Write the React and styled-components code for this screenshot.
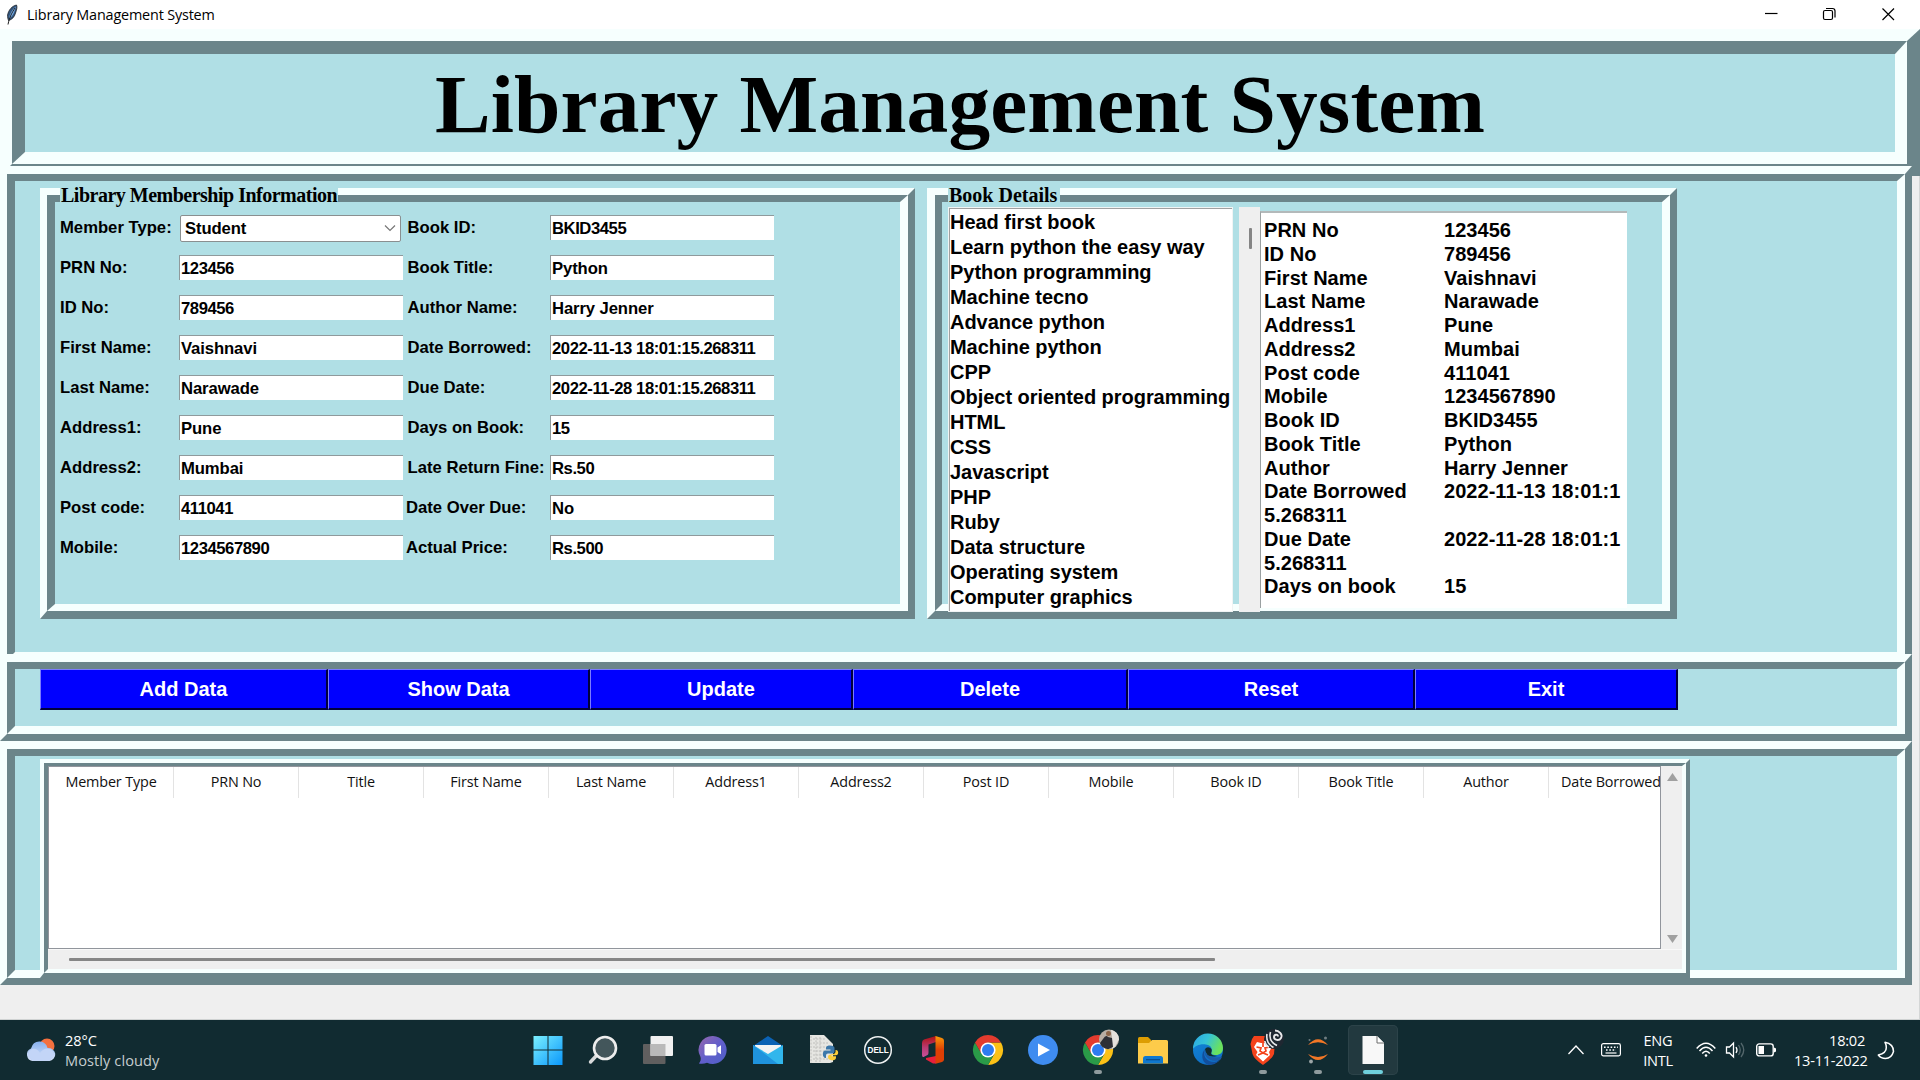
import React from "react";
import styled, { createGlobalStyle, css } from "styled-components";

const LIGHT = "#f6fffe";
const DARK = "#6b858a";
const POWDER = "#b0dfe5";

const Global = createGlobalStyle`
  * { box-sizing: border-box; }
  body { margin: 0; background: #efefef; overflow: hidden; }
  button, input { font: inherit; margin: 0; }
`;

const Screen = styled.div`
  width: 1920px;
  height: 1080px;
  display: flex;
  flex-direction: column;
  overflow: hidden;
  background: #efefef;
  color: #000;
  font-family: "Liberation Sans", Arial, sans-serif;
`;

/* ---------- window chrome ---------- */
const TitleBar = styled.header`
  height: 29px;
  flex: none;
  display: flex;
  align-items: center;
  background: #fff;
  padding-left: 4px;
`;
const WindowTitle = styled.span`
  font-family: "Open Sans", "Noto Sans", sans-serif;
  font-size: 14.4px;
  letter-spacing: -0.17px;
  margin-left: 7px;
  flex: 1;
`;
const WindowControls = styled.div`
  display: flex;
  align-self: stretch;
  svg { width: 58.5px; height: 29px; display: block; }
`;
const Client = styled.main`
  height: 991px;
  flex: none;
  display: flex;
  flex-direction: column;
  align-items: flex-start;
  border-bottom: 1px solid #cfd2d2;
  background: linear-gradient(90deg, #efefef 1919px, #d4d6d6 1919px);
`;

/* ---------- ridge relief ---------- */
const RidgeOuter = styled.section`
  position: relative;
  flex: none;
  width: ${(p) => p.$w}px;
  height: ${(p) => p.$h}px;
  margin-top: ${(p) => p.$mt || 0}px;
  border-style: solid;
  border-width: ${(p) => p.$ow};
  border-color: ${LIGHT} ${DARK} ${DARK} ${LIGHT};
  background: ${POWDER};
`;
const RidgeInner = styled.div`
  width: 100%;
  height: 100%;
  border-style: solid;
  border-width: ${(p) => p.$iw};
  border-color: ${DARK} ${LIGHT} ${LIGHT} ${DARK};
  padding: ${(p) => p.$pad || 0};
  display: flex;
  align-items: flex-start;
  gap: ${(p) => p.$gap || 0}px;
`;
function Ridge({ w, h, mt, ow, iw, pad, gap, children, legend }) {
  return (
    <RidgeOuter $w={w} $h={h} $mt={mt} $ow={ow}>
      {legend}
      <RidgeInner $iw={iw} $pad={pad} $gap={gap}>{children}</RidgeInner>
    </RidgeOuter>
  );
}

const Heading = styled.h1`
  margin: 0;
  width: 100%;
  text-align: center;
  font: bold 83.4px/97px "Liberation Serif", "Times New Roman", serif;
  letter-spacing: 0.13px;
  padding-top: 2px;
`;
const Legend = styled.div`
  position: absolute;
  top: -7px;
  left: ${(p) => p.$x}px;
  width: ${(p) => p.$w}px;
  height: 15px;
  padding-left: 1px;
  background: ${POWDER};
  font: bold 20px/15px "Liberation Serif", "Times New Roman", serif;
  letter-spacing: ${(p) => p.$ls};
  white-space: nowrap;
`;

/* ---------- membership form ---------- */
const Form = styled.div`
  display: grid;
  grid-template-columns: 119px 229px 142px 224px;
  grid-auto-rows: 40px;
  align-items: center;
`;
const Label = styled.label`
  font-weight: bold;
  font-size: 16.67px;
  line-height: 20px;
  white-space: nowrap;
  margin-left: ${(p) => p.$shift || 0}px;
`;
const Entry = styled.div`
  width: 224px;
  height: 25px;
  margin-top: -1px;
  background: #fff;
  border-top: 1px solid #8f9a9c;
  border-left: 1px solid #8f9a9c;
  padding-left: 1px;
  font-weight: bold;
  font-size: 16.67px;
  line-height: 26px;
  letter-spacing: ${(p) => (p.$tight ? "-0.44px" : "-0.1px")};
  white-space: nowrap;
`;
const Combo = styled(Entry)`
  width: 221px;
  height: 27px;
  margin-left: 1px;
  margin-top: 0;
  border: 1px solid #8a8f90;
  border-radius: 2px;
  padding: 0 4px;
  line-height: 25px;
  display: flex;
  align-items: center;
  justify-content: space-between;
`;

/* ---------- book details ---------- */
const BookList = styled.ul`
  list-style: none;
  margin: 0;
  width: 285px;
  height: 405px;
  flex: none;
  padding: 1.500px 0 0 1px;
  background: #fff;
  border: 1px solid #f0f4f4;
  box-shadow: inset 1px 1px 0 #a0a0a0;
  font: bold 20px/25px "Liberation Sans", Arial, sans-serif;
  letter-spacing: -0.04px;
  white-space: nowrap;
`;
const ListScroll = styled.div`
  width: 21px;
  height: 405px;
  flex: none;
  margin-left: 6px;
  background: #efefef;
  padding: 21px 0 0 9.5px;
`;
const ListThumb = styled.div`
  width: 3px;
  height: 21px;
  border-radius: 1px;
  background: #858585;
`;
const Receipt = styled.div`
  width: 367px;
  height: 397px;
  flex: none;
  margin-top: 4px;
  background: #fff;
  border-top: 2px solid #b3b9ba;
  border-left: 1px solid #9aa0a1;
  padding: 6px 0 0 3px;
  font: bold 20px/23.75px "Liberation Sans", Arial, sans-serif;
  letter-spacing: 0.04px;
`;
const ReceiptLine = styled.div`
  display: grid;
  grid-template-columns: 180px 1fr;
  height: 23.78px;
  white-space: nowrap;
`;

/* ---------- buttons ---------- */
const Action = styled.button`
  width: ${(p) => p.$w}px;
  height: 41px;
  flex: none;
  padding: 0;
  border-style: solid;
  border-width: 1px 2px 2px 1px;
  border-color: #7b7bff #00003c #00003c #7b7bff;
  border-radius: 0;
  background: #0000ff;
  color: #fff;
  font: bold 20px/38px "Liberation Sans", Arial, sans-serif;
`;

/* ---------- table ---------- */
const TableArea = styled.div`
  display: grid;
  grid-template-columns: 1614px 20px;
  grid-template-rows: 183px 20px;
  width: 1634px;
  height: 203px;
  background: #efefef;
`;
const Tree = styled.div`
  width: 1613px;
  background: #fff;
  border: 1px solid #91959c;
  height: 183px;
  overflow: hidden;
`;
const TreeHead = styled.div`
  display: flex;
  width: 1613px;
  height: 31px;
  background: #fff;
  overflow: hidden;
`;
const HeadCell = styled.div`
  width: 125px;
  flex: none;
  border-right: 1px solid #e3e3e3;
  text-align: center;
  font: 14.4px/29px "Open Sans", "Noto Sans", sans-serif;
  letter-spacing: -0.15px;
  color: #111;
  white-space: nowrap;
`;
const VScroll = styled.div`
  display: flex;
  flex-direction: column;
  justify-content: space-between;
  align-items: center;
  padding: 7px 0 6px;
  svg { display: block; }
`;
const HScroll = styled.div`
  grid-column: 1 / 3;
  border-top: 1px solid #f8f8f8;
  padding: 8px 0 0 21px;
`;
const HThumb = styled.div`
  width: 1146px;
  height: 3px;
  border-radius: 1px;
  background: #868686;
`;

/* ---------- taskbar ---------- */
const Taskbar = styled.footer`
  height: 60px;
  flex: none;
  display: flex;
  align-items: center;
  background: #112b31;
  color: #fff;
  font: 14.6px/20px "Open Sans", "Noto Sans", sans-serif;
  letter-spacing: -0.1px;
`;
const Weather = styled.div`
  width: 523px;
  padding-left: 25px;
  display: flex;
  align-items: center;
  gap: 9px;
  p { margin: 0; }
  p + p { color: #c5cdcf; letter-spacing: 0.07px; }
`;
const Apps = styled.div`
  display: flex;
  gap: 5px;
  width: 1033px;
`;
const AppTile = styled.div`
  position: relative;
  width: 50px;
  height: 50px;
  border-radius: 5px;
  display: flex;
  align-items: center;
  justify-content: center;
  ${(p) => p.$active && css`
    background: #22393f;
    box-shadow: inset 0 0 0 1px #2c4349;
  `}
  svg { display: block; overflow: visible; }
`;
const Indicator = styled.i`
  position: absolute;
  bottom: 1px;
  left: 50%;
  width: ${(p) => p.$w}px;
  margin-left: ${(p) => -p.$w / 2}px;
  height: 4px;
  border-radius: 2px;
  background: ${(p) => p.$c};
`;
const Tray = styled.div`
  display: flex;
  align-items: center;
  flex: 1;
  padding-left: 12px;
  svg { display: block; flex: none; }
`;
const TrayText = styled.div`
  width: ${(p) => p.$w}px;
  margin-left: ${(p) => p.$ml}px;
  text-align: ${(p) => p.$align};
  white-space: nowrap;
  letter-spacing: -0.25px;
`;
const Gap = styled.span`
  width: ${(p) => p.$w}px;
  flex: none;
`;

const Feather = () => (
  <svg width="16" height="22" viewBox="0 0 16 22">
    <path d="M12.5 1C8 2 4.500 6 3.600 11 3.400 13 4 15 4.500 16.500 8 15.500 10.500 13 11.500 9 12.600 6 13.500 3 12.500 1Z" fill="#34567d" stroke="#1b1f28" strokeWidth=".8" />
    <path d="M11.800 2.500C8 5.500 5.600 10 5 14.500 9 12.500 11 7 11.800 2.500Z" fill="#78ade6" />
    <path d="M11 4C8 8.500 5.500 13 4 20.500" stroke="#222" strokeWidth="1" fill="none" />
  </svg>
);

const ChromeMark = () => (
  <>
    <path d="M15 7.500H28A15 15 0 0 1 15 30L21.500 18.700Z" fill="#fbc116" />
    <path d="M2 7.500 8.500 18.700 15 22.500 21 19 15 30A15 15 0 0 1 2 7.500Z" fill="#2a9a48" />
    <path d="M15 7.500H28A15 15 0 0 0 2 7.500L8.500 18.700Z" fill="#e33b2e" />
    <circle cx="15" cy="15" r="7.600" fill="#fff" />
    <circle cx="15" cy="15" r="6" fill="#2f7cf0" />
  </>
);
const I = ({ children }) => <svg width="30" height="30" viewBox="0 0 30 30">{children}</svg>;

const icons = [
  <I>
    <defs><linearGradient id="win" x1="0" y1="0" x2="1" y2="1" gradientUnits="objectBoundingBox"><stop stopColor="#7bf0ff" /><stop offset="1" stopColor="#0a97fb" /></linearGradient></defs>
    <path d="M.5 1H14.500V14.500H.5ZM15.500 1H29.500V14.500H15.500ZM.5 15.500H14.500V30H.5ZM15.500 15.500H29.500V30H15.500Z" fill="url(#win)" />
  </I>,
  <I>
    <path d="M9 20 2.500 27" stroke="#d8dadb" strokeWidth="3.400" strokeLinecap="round" />
    <circle cx="17" cy="13" r="11" fill="#43565b" stroke="#ededed" strokeWidth="2.600" />
  </I>,
  <I>
    <rect x="0" y="9" width="22.500" height="20" rx="1" fill="#605f5f" />
    <rect x="7.500" y="1" width="22.500" height="20" rx="1" fill="#f0f0f0" />
    <rect x="7.500" y="9" width="15" height="12" fill="#b9b9b9" />
  </I>,
  <I>
    <defs><linearGradient id="chat" x1="0" y1="0" x2="1" y2="1"><stop stopColor="#9868ac" /><stop offset=".5" stopColor="#625ecb" /><stop offset="1" stopColor="#4e60c8" /></linearGradient></defs>
    <path d="M15 1A14 14 0 1 1 9 27.800Q5 29.500.8 28.500 3.500 25.500 2.500 22A14 14 0 0 1 15 1Z" fill="url(#chat)" />
    <rect x="6.500" y="9" width="12" height="11.500" rx="1.500" fill="#fff" />
    <path d="M19.500 12.500 23 10.300V19.300L19.500 17Z" fill="#fff" />
  </I>,
  <I>
    <path d="M0 11 15 1 30 11V14H0Z" fill="#0b62b4" />
    <path d="M2 10H28V20H2Z" fill="#f3f3f3" />
    <path d="M0 10 15 19 30 10V29H0Z" fill="#31b6ec" />
    <path d="M0 10 25 29H0Z" fill="#1f93dd" />
  </I>,
  <I>
    <path d="M2 0H16L25 9V27L22 28H2Z" fill="#e6e6e2" />
    <path d="M3 1V28M5 4H17M5 8H20M5 12H23M5 16H16M5 20H14M5 24H20M8 2V27M12 2V27" stroke="#b4b4b2" strokeWidth=".8" strokeDasharray="2 1.300" fill="none" />
    <path d="M22 10.500C17.500 10.500 18 13 18 14.500H22.500V15.500H17C14 15.500 14 23.500 18 23V20.500Q18 18.500 20 18.500H24Q26.500 18.500 26.500 16V13Q26.500 10.500 22 10.500Z" fill="#3c78aa" />
    <path d="M23.500 25.200C28.500 25.200 28 23 28 21.200H23.500V20.300H28C31 20.300 31 14.500 27.500 15 28 18.500 26 19.200 24 19.200Q20 19.200 20 22T23.500 25.200Z" fill="#fbce3a" />
  </I>,
  <I>
    <circle cx="15" cy="15" r="13.300" fill="none" stroke="#eef1f1" strokeWidth="1.500" />
    <text x="4.600" y="18.300" fontFamily="Liberation Sans" fontWeight="bold" fontSize="9" textLength="21" lengthAdjust="spacingAndGlyphs" fill="#fff">DELL</text>
  </I>,
  <I>
    <defs><linearGradient id="off" x1="0" y1="0" x2="0" y2="1"><stop stopColor="#b01010" /><stop offset=".55" stopColor="#b93b72" /><stop offset="1" stopColor="#c8509a" /></linearGradient><linearGradient id="off2" x1="0" y1="0" x2="0" y2="1"><stop stopColor="#fb9a09" /><stop offset=".5" stopColor="#dd3f05" /></linearGradient></defs>
    <path d="M18 1 6 4.500Q4 5.200 4 8V20Q4 23 6.500 21.500L9.500 20Q10.500 19.500 10.500 17.500V9.500L18 7Z" fill="url(#off)" />
    <path d="M8 23 18 21V28.500H15L8 24.500Z" fill="#e8203c" />
    <path d="M17.500 1 24 3Q26 3.700 26 5.500V24.500Q26 26.300 24 27L17.500 28.700Z" fill="url(#off2)" />
  </I>,
  <I><ChromeMark /></I>,
  <I>
    <circle cx="15" cy="15" r="15" fill="#3f8cf0" />
    <path d="M10 8.500 22 15 10 21.500Z" fill="#fff" />
  </I>,
  <I>
    <ChromeMark />
    <circle cx="26" cy="4.500" r="10" fill="#b8aea4" />
    <path d="M28-5.200Q36-3 36 4.500L32 12 29 14V2Z" fill="#e4e1dc" />
    <path d="M20 4Q23-1 25 2L29 3 30 12 25 14.200Q18 13 17 8Z" fill="#2d2f36" />
    <circle cx="25.500" cy="-1.500" r="2.500" fill="#8b6448" />
  </I>,
  <I>
    <path d="M0 3.500Q0 2 1.500 2H10L13 5V10H0Z" fill="#dd9d02" />
    <path d="M0 8H11L14 5H28.500Q30 5 30 6.500V28.500H0Z" fill="#fdcb4a" />
    <path d="M5 28.500V23.500Q5 21 7.500 21H22.500Q25 21 25 23.500V28.500Z" fill="#0f78cf" />
    <path d="M8 24.700H22" stroke="#0a4b8c" strokeWidth="1.200" />
  </I>,
  <I>
    <defs>
      <linearGradient id="e1" x1="0" y1="0" x2="1" y2=".4"><stop stopColor="#2aa5e4" /><stop offset=".5" stopColor="#35c3d8" /><stop offset="1" stopColor="#6be25c" /></linearGradient>
      <linearGradient id="e2" x1="0" y1="0" x2=".6" y2="1"><stop stopColor="#1187d8" /><stop offset="1" stopColor="#0f6cc4" /></linearGradient>
    </defs>
    <circle cx="15" cy="15" r="15" fill="url(#e2)" />
    <path d="M0 14A15 15 0 0 1 30 13C30 18 26.500 20 23 20 19 20 17.500 18.500 18.500 17 19.500 15 19 10.500 13 9.500 7 8.500 2 11 0 14Z" fill="url(#e1)" />
    <path d="M12 14C9 21 14 27 21 27 24 27 26 26 28 24 24 29 19 30 15 30 8 27 8 18 12 14Z" fill="#124f9c" />
    <path d="M12 14C11 19 17 24 28 22L29 21.500Q28.500 23 27.500 24.500C18 29 9 21 12 14Z" fill="#1b5aa8" />
    <path d="M12 14Q14 11 17.500 13 19.500 14.500 18.500 17 17 19.500 21 20.500L24 21Q13 23.500 12 14Z" fill="#112b31" />
  </I>,
  <I>
    <path d="M6 1H22L25 5 27 7 26 19Q24 24 15 30 6 24 4.500 19L2.500 9 4 4Z" fill="#f4431c" />
    <path d="M9 7 13 8H18L22 7 24 12 21 17 22 20 15 26.500 8 20 9.500 17 6 12Z" fill="#fff" />
    <path d="M8.500 12 13 13 12 16 15 18 18 16 17 13 22 12M10 20 15 18 20 20M15 8V12" stroke="#f4431c" strokeWidth="1.700" fill="none" />
    <circle cx="26" cy="4" r="10" fill="#1f2731" />
    <path d="M30 1.500C30-1 26-1 26 2S31 6.500 33 3 31-4.500 27-4.500" stroke="#e8e8ea" strokeWidth="1.900" fill="none" />
    <path d="M22.500-3Q20 6 29 10.500M19-1Q17.500 8 25.500 12.500M16.800 6Q17.500 10.500 21 12.300" stroke="#e8e8ea" strokeWidth="1.600" fill="none" />
  </I>,
  <I>
    <path d="M5 10Q15-1.500 25 10 15 4.500 5 10ZM5 19Q15 31 25 19 15 25 5 19Z" fill="#f37726" />
    <circle cx="22.500" cy="3" r="1.500" fill="#6f7d81" /><circle cx="6.500" cy="5" r="1" fill="#6f7d81" /><circle cx="8" cy="26.500" r="1.900" fill="#9da6a8" />
  </I>,
  <I>
    <path d="M4.500 1H19L26 8V29H4.500Z" fill="#f8f8f8" />
    <path d="M19 1V8H26" fill="#fff" stroke="#6c6c6c" strokeWidth="1" />
  </I>,
];
const running = { 10: 8, 13: 8, 14: 8, 15: 20 };

const formRows = [
  ["Member Type:", "Student", "Book ID:", "BKID3455"],
  ["PRN No:", "123456", "Book Title:", "Python"],
  ["ID No:", "789456", "Author Name:", "Harry Jenner"],
  ["First Name:", "Vaishnavi", "Date Borrowed:", "2022-11-13 18:01:15.268311"],
  ["Last Name:", "Narawade", "Due Date:", "2022-11-28 18:01:15.268311"],
  ["Address1:", "Pune", "Days on Book:", "15"],
  ["Address2:", "Mumbai", "Late Return Fine:", "Rs.50"],
  ["Post code:", "411041", "Date Over Due:", "No"],
  ["Mobile:", "1234567890", "Actual Price:", "Rs.500"],
];
const books = ["Head first book", "Learn python the easy way", "Python programming", "Machine tecno", "Advance python", "Machine python", "CPP", "Object oriented programming", "HTML", "CSS", "Javascript", "PHP", "Ruby", "Data structure", "Operating system", "Computer graphics"];
const receipt = [
  ["PRN No", "123456"], ["ID No", "789456"], ["First Name", "Vaishnavi"], ["Last Name", "Narawade"],
  ["Address1", "Pune"], ["Address2", "Mumbai"], ["Post code", "411041"], ["Mobile", "1234567890"],
  ["Book ID", "BKID3455"], ["Book Title", "Python"], ["Author", "Harry Jenner"],
  ["Date Borrowed", "2022-11-13 18:01:1"], ["5.268311", ""], ["Due Date", "2022-11-28 18:01:1"], ["5.268311", ""],
  ["Days on book", "15"],
];
const actions = [["Add Data", 288], ["Show Data", 262], ["Update", 263], ["Delete", 275], ["Reset", 287], ["Exit", 263]];
const columns = ["Member Type", "PRN No", "Title", "First Name", "Last Name", "Address1", "Address2", "Post ID", "Mobile", "Book ID", "Book Title", "Author", "Date Borrowed"];
const hasDigits = (s) => /\d/.test(s);

export default function App() {
  return (
    <Screen>
      <Global />
      <TitleBar>
        <Feather />
        <WindowTitle>Library Management System</WindowTitle>
        <WindowControls>
          <svg viewBox="0 0 58.500 29"><path d="M20 13.500H32.500" stroke="#000" strokeWidth="1.200" /></svg>
          <svg viewBox="0 0 58.500 29" fill="none" stroke="#000" strokeWidth="1.200">
            <rect x="20.500" y="10.500" width="9" height="9" rx="1.500" />
            <path d="M23 8.500H29.500Q32 8.500 32 11V17.500" />
          </svg>
          <svg viewBox="0 0 58.500 29"><path d="M20.500 8.500 32 20M32 8.500 20.500 20" stroke="#000" strokeWidth="1.200" /></svg>
        </WindowControls>
      </TitleBar>

      <Client>
        <Ridge w={1920} h={147} ow="12px 13px 12px 12px" iw="13px 12px 12px 13px">
          <Heading>Library Management System</Heading>
        </Ridge>

        <Ridge w={1912} h={501} mt={-10} ow="8px 7px 7px 7px" iw="7px 8px 8px 8px" pad="7px 0 0 25px" gap={12}>
          <Ridge
            w={875} h={431} ow="7px 7px 8px 7px" iw="7px 8px 7px 8px" pad="6px 0 0 5px"
            legend={<Legend $x={13} $w={278} $ls="-0.5px">Library Membership Information</Legend>}
          >
            <Form>
              {formRows.map(([a, av, b, bv], i) => (
                <React.Fragment key={a}>
                  <Label>{a}</Label>
                  {i === 0 ? (
                    <Combo>
                      {av}
                      <svg width="12" height="8" viewBox="0 0 12 8"><path d="M1 1.500 6 6.500 11 1.500" stroke="#777" strokeWidth="1.200" fill="none" /></svg>
                    </Combo>
                  ) : (
                    <Entry $tight={hasDigits(av)}>{av}</Entry>
                  )}
                  <Label $shift={i > 6 ? -2 : -0.5}>{b}</Label>
                  <Entry $tight={hasDigits(bv)}>{bv}</Entry>
                </React.Fragment>
              ))}
            </Form>
          </Ridge>
          <Ridge
            w={750} h={431} ow="7px 7px 8px 8px" iw="7px 8px 7px 7px" pad="5px 0 0 6px"
            legend={<Legend $x={13} $w={112} $ls="0">Book Details</Legend>}
          >
            <BookList>{books.map((b) => <li key={b}>{b}</li>)}</BookList>
            <ListScroll><ListThumb /></ListScroll>
            <Receipt>
              {receipt.map(([k, v], i) => (
                <ReceiptLine key={i}><span>{k}</span><span>{v}</span></ReceiptLine>
              ))}
            </Receipt>
          </Ridge>
        </Ridge>

        <Ridge w={1912} h={87} mt={-13} ow="8px 7px 7px 7px" iw="7px 8px 8px 8px" pad="0 0 0 25px">
          {actions.map(([t, w]) => <Action key={t} $w={w}>{t}</Action>)}
        </Ridge>

        <Ridge w={1912} h={244} ow="8px 7px 7px 7px" iw="7px 8px 8px 8px" pad="3px 0 0 25px">
          <Ridge w={1650} h={219} ow="4px 4px 5px 4px" iw="3px 4px 4px 4px">
            <TableArea>
              <Tree>
                <TreeHead>{columns.map((c) => <HeadCell key={c}>{c}</HeadCell>)}</TreeHead>
              </Tree>
              <VScroll>
                <svg width="11" height="8"><path d="M5.500 0 11 8H0Z" fill="#a0a0a0" /></svg>
                <svg width="11" height="8"><path d="M0 0H11L5.500 8Z" fill="#a0a0a0" /></svg>
              </VScroll>
              <HScroll><HThumb /></HScroll>
            </TableArea>
          </Ridge>
        </Ridge>
      </Client>

      <Taskbar>
        <Weather>
          <svg width="31" height="30" viewBox="0 0 31 30">
            <defs><linearGradient id="cl" x1="0" y1="0" x2="0" y2="1"><stop stopColor="#86b0ee" /><stop offset="1" stopColor="#dce6fa" /></linearGradient></defs>
            <circle cx="22" cy="11" r="7.500" fill="#f4703f" />
            <path d="M8 26A6.500 6.500 0 0 1 6 13.500Q8 6 15 6.500 21 7 22.500 13A7 6.500 0 0 1 24 26Z" fill="url(#cl)" />
            <path d="M8 26A6.500 6.500 0 0 1 7 14Q12 13 15 18 19 12 25 14A6.500 6.500 0 0 1 24 26Z" fill="#c3d5f7" />
          </svg>
          <div><p>28°C</p><p>Mostly cloudy</p></div>
        </Weather>
        <Apps>
          {icons.map((icon, i) => (
            <AppTile key={i} $active={i === 15}>
              {icon}
              {running[i] && <Indicator $w={running[i]} $c={i === 15 ? "#6fd0dc" : "#8f9b9e"} />}
            </AppTile>
          ))}
        </Apps>
        <Tray>
          <svg width="16" height="10" viewBox="0 0 16 10"><path d="M.5 9 8 1 15.500 9" stroke="#fff" strokeWidth="1.300" fill="none" /></svg>
          <Gap $w={17} />
          <svg width="20" height="14" viewBox="0 0 20 14" fill="none" stroke="#fff">
            <rect x=".6" y=".6" width="18.800" height="12.300" rx="1.800" strokeWidth="1.200" />
            <path d="M3 4.200H17M5 7H15" strokeWidth="1.500" strokeDasharray="1.600 1.700" />
            <path d="M4.500 10H15.500" strokeWidth="1.200" />
          </svg>
          <TrayText $w={36} $ml={19} $align="center">ENG<br />INTL</TrayText>
          <Gap $w={20} />
          <svg width="20" height="16" viewBox="0 0 20 16" fill="none" stroke="#fff" strokeWidth="1.500">
            <path d="M.7 6.500Q10-4 19.300 6.500M3.500 9Q10 1.500 16.500 9M6.200 11.500Q10 7 13.800 11.500" />
            <circle cx="10" cy="13.500" r="1.300" fill="#fff" stroke="none" />
          </svg>
          <Gap $w={9} />
          <svg width="21" height="18" viewBox="0 0 21 18" fill="none" stroke="#fff" strokeWidth="1.300">
            <path d="M1.500 6H4.500L8.500 2V16L4.500 12H1.500ZM11 6Q13 9 11 12" />
            <path d="M13.500 4Q17 9 13.500 14M16 2Q21.500 9 16 16" stroke="#54676c" />
          </svg>
          <Gap $w={10} />
          <svg width="21" height="14" viewBox="0 0 21 14">
            <rect x=".7" y=".9" width="16.500" height="12" rx="2.500" fill="none" stroke="#fff" strokeWidth="1.400" />
            <rect x="2.500" y="3" width="5.500" height="8" fill="#fff" /><path d="M18 4.500 20 5.500V8.500L18 9.500Z" fill="#fff" />
          </svg>
          <TrayText $w={71} $ml={17} $align="right">18:02<br />13-11-2022</TrayText>
          <Gap $w={12} />
          <svg width="18" height="19" viewBox="0 0 18 19"><path d="M8 1.300Q16.500 3 16.500 10.500 14.500 17.500 8.500 17.500 4 17.500 1.300 14 9.500 12 9.300 6.500 9.300 3.500 8 1.300Z" fill="none" stroke="#fff" strokeWidth="1.500" strokeLinejoin="round" /></svg>
        </Tray>
      </Taskbar>
    </Screen>
  );
}
